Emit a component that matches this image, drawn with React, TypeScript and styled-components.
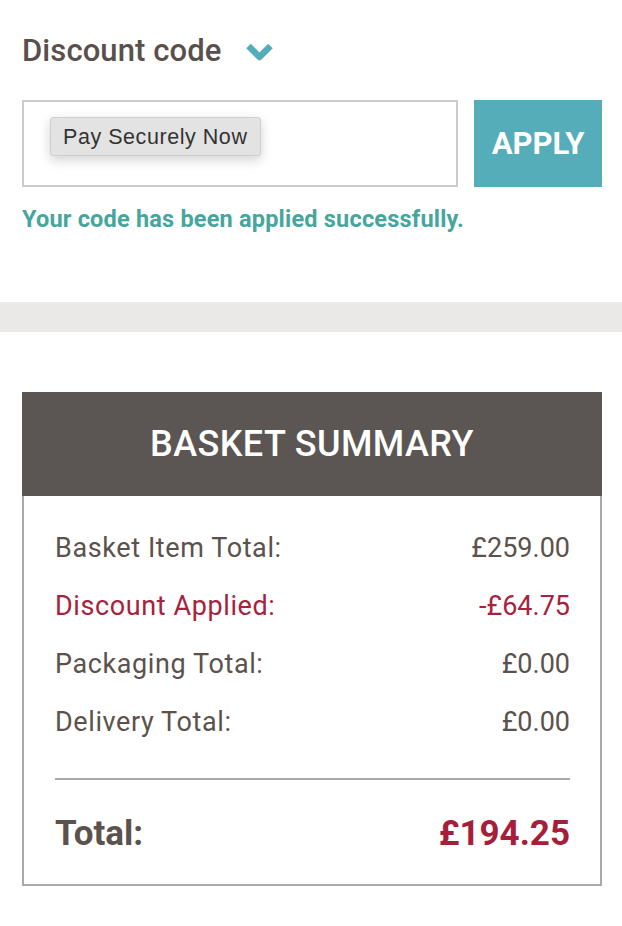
import React from "react";
import styled, { createGlobalStyle } from "styled-components";

const GlobalStyle = createGlobalStyle`
  html, body {
    margin: 0;
    padding: 0;
    background: #ffffff;
  }
  body {
    font-family: Roboto, "Noto Sans", sans-serif;
    -webkit-font-smoothing: antialiased;
  }
`;

const Page = styled.div`
  width: 622px;
  padding-top: 32px;
  box-sizing: border-box;
`;

const Section = styled.section`
  padding: 0 20px 0 22px;
`;

const Heading = styled.h2`
  display: flex;
  align-items: center;
  gap: 23px;
  margin: 0;
  font-size: 31px;
  font-weight: 500;
  line-height: 37px;
  letter-spacing: 0.1px;
  color: #5a504b;
`;

const Chevron = styled.svg`
  width: 29px;
  height: 20px;
  margin-top: 3px;
`;

const Form = styled.form`
  display: flex;
  gap: 16px;
  margin-top: 31px;
  height: 87px;
`;

const InputBox = styled.div`
  position: relative;
  flex: 0 0 436px;
  box-sizing: border-box;
  border: 2px solid #cbcbcb;
  background: #fff;
`;

const Suggestion = styled.div`
  position: absolute;
  left: 26px;
  top: 15px;
  height: 39px;
  line-height: 39px;
  padding: 0 13px 0 12px;
  box-sizing: border-box;
  background: #e3e3e3;
  border: 1px solid #cfcfcf;
  border-radius: 3px;
  box-shadow: 0 4px 12px rgba(0, 0, 0, 0.18);
  font-family: "Liberation Sans", Arial, sans-serif;
  font-size: 21.5px;
  letter-spacing: 0.55px;
  color: #333;
  white-space: nowrap;
`;

const ApplyButton = styled.button`
  flex: 1;
  border: 0;
  margin: 0;
  padding: 0;
  background: #54adb9;
  color: #fff;
  font-family: Roboto, sans-serif;
  font-size: 31px;
  font-weight: 700;
  cursor: pointer;
`;

const Success = styled.p`
  margin: 18px 0 0;
  font-size: 23.5px;
  font-weight: 700;
  line-height: 28px;
  letter-spacing: 0.2px;
  color: #46a69e;
`;

const Divider = styled.div`
  height: 30px;
  margin-top: 69px;
  background: #eae9e7;
`;

const Summary = styled.div`
  margin: 60px 20px 0 22px;
`;

const SummaryHeader = styled.div`
  height: 104px;
  background: #5b5653;
  color: #fff;
  display: flex;
  align-items: center;
  justify-content: center;
  font-size: 36px;
  font-weight: 500;
  letter-spacing: 0.4px;
`;

const SummaryBody = styled.div`
  border: 2px solid #aaaaaa;
  border-top: 0;
  padding: 23px 30px 29px 31px;
`;

const Row = styled.div<{ $accent?: boolean }>`
  display: flex;
  justify-content: space-between;
  height: 58px;
  line-height: 58px;
  font-size: 27px;
  font-weight: 400;
  color: ${(p) => (p.$accent ? "#a8213d" : "#5b524d")};
`;

const Label = styled.span`
  letter-spacing: 0.6px;
`;

const Rule = styled.hr`
  margin: 27px 0 33px;
  border: 0;
  height: 2px;
  background: #a9a9a9;
`;

const TotalRow = styled.div`
  display: flex;
  justify-content: space-between;
  line-height: 42px;
  font-size: 35px;
  font-weight: 700;
  color: #5b524d;
`;

const TotalValue = styled.span`
  color: #a61e3a;
`;

const rows = [
  { label: "Basket Item Total:", value: "£259.00" },
  { label: "Discount Applied:", value: "-£64.75", accent: true },
  { label: "Packaging Total:", value: "£0.00" },
  { label: "Delivery Total:", value: "£0.00" },
];

export default function App() {
  return (
    <Page>
      <GlobalStyle />
      <Section>
        <Heading>
          Discount code
          <Chevron viewBox="0 0 29 20" aria-hidden="true">
            <polyline
              points="3.5,4 14.5,15 25.5,4"
              fill="none"
              stroke="#54adb9"
              strokeWidth="6.5"
              strokeLinejoin="round"
            />
          </Chevron>
        </Heading>
        <Form onSubmit={(e) => e.preventDefault()}>
          <InputBox>
            <Suggestion>Pay Securely Now</Suggestion>
          </InputBox>
          <ApplyButton type="submit">APPLY</ApplyButton>
        </Form>
        <Success>Your code has been applied successfully.</Success>
      </Section>
      <Divider />
      <Summary>
        <SummaryHeader>BASKET SUMMARY</SummaryHeader>
        <SummaryBody>
          {rows.map((r) => (
            <Row key={r.label} $accent={r.accent}>
              <Label>{r.label}</Label>
              <span>{r.value}</span>
            </Row>
          ))}
          <Rule />
          <TotalRow>
            <span>Total:</span>
            <TotalValue>£194.25</TotalValue>
          </TotalRow>
        </SummaryBody>
      </Summary>
    </Page>
  );
}
